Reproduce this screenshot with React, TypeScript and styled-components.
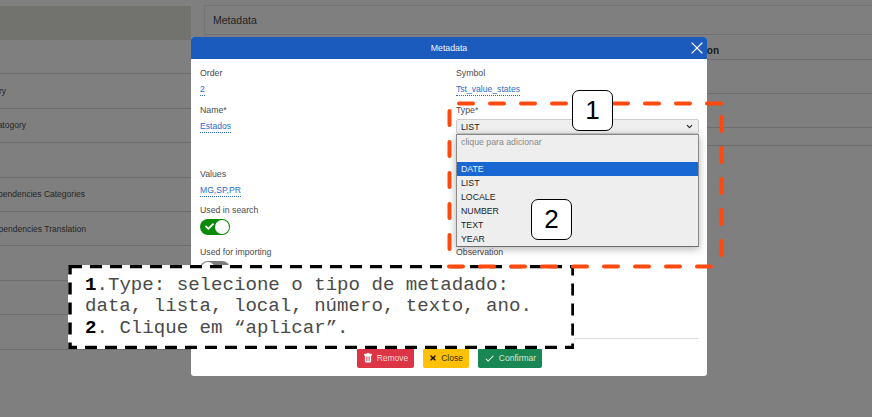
import React from 'react';
import styled, { createGlobalStyle } from 'styled-components';
import { BsTrashFill } from 'react-icons/bs';
import { FaTimes, FaCheck } from 'react-icons/fa';
import { MdCheck } from 'react-icons/md';
import { X, ChevronDown } from 'lucide-react';

const GlobalStyle = createGlobalStyle`
  html, body {
    margin: 0;
    height: 100%;
    overflow: hidden;
    background: #7f7f7f;
    font-family: 'Liberation Sans', Arial, sans-serif;
  }
`;

const Page = styled.div`
  position: relative;
  width: 872px;
  height: 417px;
  overflow: hidden;
  display: flex;
  gap: 13px;
  background: #7f7f7f;
`;

const Sidebar = styled.div`
  width: 191px;
  flex: none;
  padding-top: 6px;
`;

const SidebarHeader = styled.div`
  height: 34px;
  background: #72726f;
`;

const SidebarRow = styled.div`
  height: 34.4px;
  box-sizing: border-box;
  display: flex;
  align-items: center;
  border-bottom: 1px solid #6c6c6c;
`;

const SidebarLabel = styled.div<{ $end: number }>`
  width: ${(p) => p.$end}px;
  display: flex;
  justify-content: flex-end;
  white-space: nowrap;
  font-size: 8.5px;
  color: #262626;
`;

const MainCard = styled.div`
  flex: 1;
  margin-top: 5px;
  border-top: 1px solid #757575;
  border-left: 1px solid #757575;
  height: 140px;
`;

const CardTitle = styled.div`
  height: 29px;
  box-sizing: border-box;
  padding-left: 8px;
  display: flex;
  align-items: center;
  font-size: 10.5px;
  color: #1f1f1f;
  border-bottom: 1px solid #707070;
`;

const TableRow = styled.div<{ $h: number }>`
  height: ${(p) => p.$h}px;
  box-sizing: border-box;
  border-bottom: 1px solid #6c6c6c;
  display: flex;
  align-items: center;
  justify-content: flex-end;
  padding-right: 153px;
  padding-top: 6px;
  font-size: 10px;
  font-weight: 700;
  color: #1a1a1a;
`;

const Modal = styled.div`
  position: absolute;
  left: 191px;
  top: 37px;
  width: 516px;
  height: 339px;
  display: flex;
  flex-direction: column;
  background: #fff;
  border-radius: 3px;
  overflow: visible;
`;

const ModalHeader = styled.div`
  position: relative;
  height: 22px;
  flex: none;
  display: flex;
  align-items: center;
  justify-content: center;
  background: #1a5bbd;
  border-radius: 3px 3px 0 0;
  color: #f0f4fb;
  font-size: 8.75px;
`;

const CloseButton = styled.span`
  position: absolute;
  right: 0;
  top: 1px;
  display: flex;
  color: #fff;
`;

const ModalBody = styled.div`
  flex: 1;
  display: grid;
  grid-template-columns: 256px 243px;
  padding: 8px 0 0 9px;
`;

const Column = styled.div`
  display: flex;
  flex-direction: column;
`;

const Field = styled.div<{ $h: number }>`
  position: relative;
  height: ${(p) => p.$h}px;
  flex: none;
`;

const Label = styled.div`
  height: 13px;
  line-height: 13px;
  font-size: 8.75px;
  color: #4a4a4a;
  margin-bottom: 3px;
`;

const Value = styled.div`
  width: fit-content;
  height: 12px;
  line-height: 12px;
  font-size: 8.6px;
  color: #2c6cc9;
  border-bottom: 1px dotted #2c6cc9;
`;

const Toggle = styled.div<{ $on?: boolean }>`
  width: 30px;
  height: 16px;
  box-sizing: border-box;
  padding: 1px;
  border-radius: 8px;
  display: flex;
  align-items: center;
  justify-content: ${(p) => (p.$on ? 'flex-end' : 'flex-start')};
  position: relative;
  background: ${(p) => (p.$on ? '#0a8a0a' : '#7c7c7c')};
  margin-top: -1px;
`;

const ToggleKnob = styled.span`
  width: 14px;
  height: 14px;
  border-radius: 50%;
  background: #fff;
`;

const ToggleCheck = styled.span`
  position: absolute;
  left: 5px;
  top: 3px;
  display: flex;
  color: #fff;
`;

const SelectBox = styled.div`
  height: 15px;
  box-sizing: border-box;
  margin-top: -1px;
  padding: 0 4px;
  display: flex;
  align-items: center;
  justify-content: space-between;
  background: #efefef;
  border: 1px solid #ccc;
  border-radius: 2px;
  font-size: 8.75px;
  color: #222;
`;

const Dropdown = styled.div`
  position: absolute;
  left: 0;
  right: 0;
  top: 30px;
  height: 113px;
  box-sizing: border-box;
  background: #eee;
  border: 1px solid #8a8a8a;
  border-bottom-color: #6f6f6f;
  box-shadow: 0 2px 8px rgba(0, 0, 0, 0.3);
  z-index: 1;
`;

const Option = styled.div<{ $active?: boolean; $hint?: boolean }>`
  height: 14px;
  line-height: 14px;
  padding-left: 4px;
  font-size: 8.75px;
  color: ${(p) => (p.$hint ? '#8a8a8a' : p.$active ? '#e8f0fb' : '#222')};
  background: ${(p) => (p.$active ? '#1967d2' : 'transparent')};
`;

const OptionGap = styled.div`
  height: 13px;
`;

const Footer = styled.div`
  flex: none;
  margin: 0 8px 0 9px;
  height: 38px;
  box-sizing: border-box;
  border-top: 1px solid #dedede;
  padding-top: 9px;
  display: flex;
  justify-content: center;
  gap: 9px;
`;

const Button = styled.div<{ $bg: string; $fg: string; $w: number }>`
  width: ${(p) => p.$w}px;
  height: 20px;
  box-sizing: border-box;
  border-radius: 2px;
  display: flex;
  align-items: center;
  justify-content: center;
  gap: 4px;
  font-size: 8.5px;
  background: ${(p) => p.$bg};
  color: ${(p) => p.$fg};
`;

const OrangeFrame = styled.svg`
  position: absolute;
  left: 0;
  top: 0;
  z-index: 3;
  pointer-events: none;
`;

const NoteBox = styled.div`
  position: absolute;
  left: 68px;
  top: 265px;
  width: 506px;
  height: 84px;
  box-sizing: border-box;
  padding: 10px 0 0 17px;
  background: #fff;
  z-index: 2;
  font-family: 'Liberation Mono', 'Courier New', monospace;
  font-size: 19.1px;
  line-height: 21.4px;
  color: #4a4a4a;
  white-space: pre;
`;

const NoteBorder = styled.svg`
  position: absolute;
  left: 0;
  top: 0;
`;

const NoteLine = styled.div`
  height: 21.4px;
  position: relative;
`;

const NoteNumber = styled.b`
  color: #000;
`;

const Callout = styled.div<{ $x: number; $y: number }>`
  position: absolute;
  left: ${(p) => p.$x}px;
  top: ${(p) => p.$y}px;
  width: 41px;
  height: 41px;
  box-sizing: border-box;
  border: 1px solid #000;
  border-radius: 7px;
  background: #fff;
  display: flex;
  align-items: center;
  justify-content: center;
  font-size: 26px;
  color: #000;
  z-index: 4;
`;

const sidebarRows: { text?: string; end?: number }[] = [
  {},
  { text: 'Category', end: 6 },
  { text: 'Catogory', end: 26 },
  {},
  { text: 'Dependencies Categories', end: 85 },
  { text: 'Dependencies Translation', end: 86 },
  {},
  {},
  {},
];

const typeOptions = ['DATE', 'LIST', 'LOCALE', 'NUMBER', 'TEXT', 'YEAR'];

export default function App() {
  return (
    <>
      <GlobalStyle />
      <Page>
        <Sidebar>
          <SidebarHeader />
          {sidebarRows.map((row, i) => (
            <SidebarRow key={i}>
              {row.text && <SidebarLabel $end={row.end!}>{row.text}</SidebarLabel>}
            </SidebarRow>
          ))}
        </Sidebar>
        <MainCard>
          <CardTitle>Metadata</CardTitle>
          <TableRow $h={25}>Description</TableRow>
          <TableRow $h={34} />
          <TableRow $h={34} />
          <TableRow $h={18} />
        </MainCard>

        <Modal>
          <ModalHeader>
            Metadata
            <CloseButton>
              <X size={20} strokeWidth={1.4} />
            </CloseButton>
          </ModalHeader>
          <ModalBody>
            <Column>
              <Field $h={37}>
                <Label>Order</Label>
                <Value>2</Value>
              </Field>
              <Field $h={64}>
                <Label>Name*</Label>
                <Value>Estados</Value>
              </Field>
              <Field $h={36}>
                <Label>Values</Label>
                <Value>MG,SP,PR</Value>
              </Field>
              <Field $h={42}>
                <Label>Used in search</Label>
                <Toggle $on>
                  <ToggleCheck>
                    <FaCheck size={9} />
                  </ToggleCheck>
                  <ToggleKnob />
                </Toggle>
              </Field>
              <Field $h={40}>
                <Label>Used for importing</Label>
                <Toggle>
                  <ToggleKnob />
                </Toggle>
              </Field>
            </Column>
            <Column>
              <Field $h={37}>
                <Label>Symbol</Label>
                <Value>Tst_value_states</Value>
              </Field>
              <Field $h={142}>
                <Label>Type*</Label>
                <SelectBox>
                  LIST
                  <ChevronDown size={9} strokeWidth={3} />
                </SelectBox>
                <Dropdown>
                  <Option $hint>clique para adicionar</Option>
                  <OptionGap />
                  {typeOptions.map((o) => (
                    <Option key={o} $active={o === 'DATE'}>
                      {o}
                    </Option>
                  ))}
                </Dropdown>
              </Field>
              <Field $h={20}>
                <Label>Observation</Label>
              </Field>
            </Column>
          </ModalBody>
          <Footer>
            <Button $bg="#dc3545" $fg="#f6d9dc" $w={57}>
              <BsTrashFill size={10} color="#fff" />
              Remove
            </Button>
            <Button $bg="#ffc107" $fg="#3a2d00" $w={46}>
              <FaTimes size={8} color="#111" />
              Close
            </Button>
            <Button $bg="#198754" $fg="#d4e9dd" $w={64}>
              <MdCheck size={11} color="#fff" />
              Confirmar
            </Button>
          </Footer>
        </Modal>

        <NoteBox>
          <NoteBorder width="506" height="84">
            <rect
              x="2"
              y="1.5"
              width="503"
              height="81"
              fill="none"
              stroke="#000"
              strokeWidth="3.5"
              strokeDasharray="12 8"
            />
          </NoteBorder>
          <NoteLine>
            <NoteNumber>1</NoteNumber>.Type: selecione o tipo de metadado:
          </NoteLine>
          <NoteLine>data, lista, local, número, texto, ano.</NoteLine>
          <NoteLine>
            <NoteNumber>2</NoteNumber>. Clique em “aplicar”.
          </NoteLine>
        </NoteBox>

        <OrangeFrame width="872" height="417">
          <g stroke="#ff4a0f" strokeWidth="4" strokeLinecap="round" strokeDasharray="14 17" fill="none">
            <line x1="459" y1="103.5" x2="722" y2="103.5" />
            <line x1="449.5" y1="111" x2="449.5" y2="252" />
            <line x1="449" y1="266.5" x2="720" y2="266.5" />
            <line x1="721.5" y1="117" x2="721.5" y2="258" />
          </g>
        </OrangeFrame>

        <Callout $x={572} $y={90}>1</Callout>
        <Callout $x={531} $y={199}>2</Callout>
      </Page>
    </>
  );
}
